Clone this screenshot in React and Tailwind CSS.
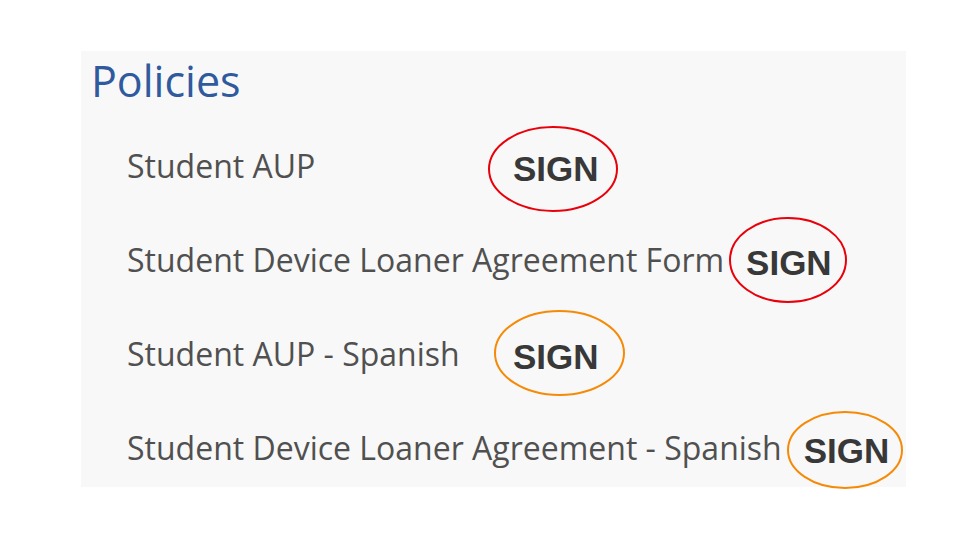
import React from "react";

const rows = [
  { label: "Student AUP", color: "#e8000b", e: { dx: -3, dy: 1, rx: 64, ry: 42 } },
  { label: "Student Device Loaner Agreement Form", color: "#e8000b", e: { dx: -1, dy: -2, rx: 58, ry: 42 } },
  { label: "Student AUP - Spanish", color: "#f58a07", e: { dx: 3.5, dy: -3, rx: 64.5, ry: 42 } },
  { label: "Student Device Loaner Agreement - Spanish", color: "#f58a07", e: { dx: -2, dy: 0, rx: 57, ry: 38 } },
];

function Sign({ color, e }) {
  const w = e.rx * 2 + 4;
  const h = e.ry * 2 + 4;
  return (
    <span className="relative inline-flex items-center justify-center mt-[4px]">
      <span
        className="text-[35px] font-bold leading-none text-[#383838]"
        style={{ fontFamily: '"Liberation Sans", Arial, sans-serif' }}
      >
        SIGN
      </span>
      <svg
        className="absolute pointer-events-none"
        width={w}
        height={h}
        style={{ left: `calc(50% + ${e.dx}px - ${w / 2}px)`, top: `calc(50% + ${e.dy}px - ${h / 2}px)` }}
      >
        <ellipse cx={w / 2} cy={h / 2} rx={e.rx} ry={e.ry} fill="none" stroke={color} strokeWidth="2" />
      </svg>
    </span>
  );
}

export default function App() {
  return (
    <div className="w-[960px] h-[540px] bg-white pt-[51px] pl-[81px]" style={{ fontFamily: '"Open Sans", sans-serif' }}>
      <div className="w-[825px] h-[436px] bg-[#f8f8f8] pl-[10px]">
        <h1 className="text-[43px] leading-none text-[#2f5a9e] pt-[8px]">Policies</h1>
        <div className="pl-[36px] pt-[46px] flex flex-col gap-[58px]">
          {rows.map((r) => (
            <div key={r.label} className="flex items-center gap-[22px] h-[36px]">
              <span className="min-w-[364px] text-[32px] leading-none text-[#505050]">{r.label}</span>
              <Sign color={r.color} e={r.e} />
            </div>
          ))}
        </div>
      </div>
    </div>
  );
}
